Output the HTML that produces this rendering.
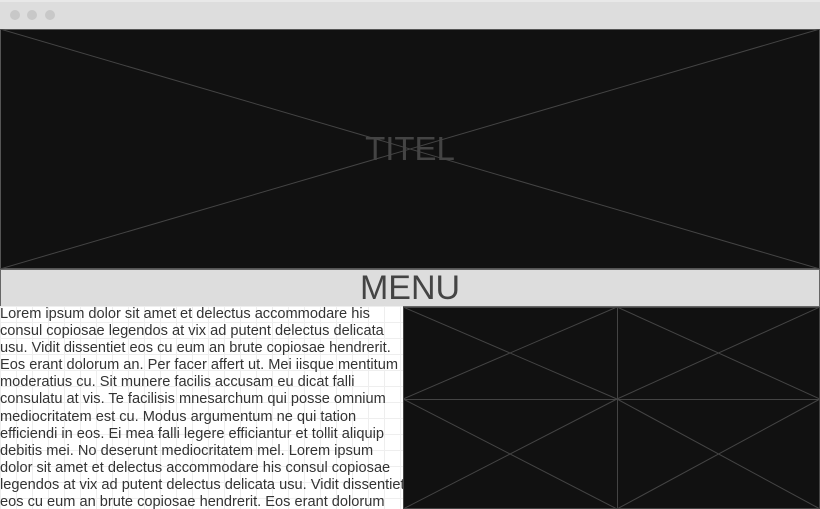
<!DOCTYPE html><html><head><style>
body{margin:0;width:820px;height:509px;overflow:hidden;background:#fff;font-family:"Liberation Sans",sans-serif;position:relative}
.bar{position:absolute;left:0;top:0;width:820px;height:29px;background:#ddd;border-top:2px solid #e8e8e8;box-sizing:border-box}
.dot{position:absolute;top:8px;width:10px;height:10px;border-radius:50%;background:#c8c8c8}
.hero{position:absolute;left:0;top:29px;width:820px;height:240px;background:#111;border:1px solid #555;box-sizing:border-box}
.hero span{position:absolute;left:0;right:0;top:100px;text-align:center;font-size:33px;color:#444}
.menu{position:absolute;left:0;top:269px;width:820px;height:38px;background:#ddd;border:1px solid #666;box-sizing:border-box;text-align:center;font-size:34px;line-height:36px;color:#444}
.txt{position:absolute;left:0;top:306px;width:403px;height:203px;overflow:hidden;font-size:14.6px;line-height:17.1px;color:#333;white-space:nowrap;
background-image:linear-gradient(#eee 1px,transparent 1px),linear-gradient(90deg,#eee 1px,transparent 1px);background-size:16px 16px}
.grid{position:absolute;left:403px;top:307px;width:417px;height:202px;background:#111}
</style></head><body>
<div class="bar"><div class="dot" style="left:10px"></div><div class="dot" style="left:27px"></div><div class="dot" style="left:45px"></div></div>
<div class="hero"><svg width="820" height="240" style="position:absolute;left:-1px;top:-1px"><line x1="0" y1="0" x2="820" y2="240" stroke="#444"/><line x1="820" y1="0" x2="0" y2="240" stroke="#444"/></svg><span>TITEL</span></div>
<div class="menu">MENU</div>
<div class="txt">Lorem ipsum dolor sit amet et delectus accommodare his<br>consul copiosae legendos at vix ad putent delectus delicata<br>usu. Vidit dissentiet eos cu eum an brute copiosae hendrerit.<br>Eos erant dolorum an. Per facer affert ut. Mei iisque mentitum<br>moderatius cu. Sit munere facilis accusam eu dicat falli<br>consulatu at vis. Te facilisis mnesarchum qui posse omnium<br>mediocritatem est cu. Modus argumentum ne qui tation<br>efficiendi in eos. Ei mea falli legere efficiantur et tollit aliquip<br>debitis mei. No deserunt mediocritatem mel. Lorem ipsum<br>dolor sit amet et delectus accommodare his consul copiosae<br>legendos at vix ad putent delectus delicata usu. Vidit dissentiet<br>eos cu eum an brute copiosae hendrerit. Eos erant dolorum</div>
<div class="grid"><svg width="417" height="202" style="position:absolute;left:0;top:0">
<g stroke="#444" fill="none">
<rect x="0.5" y="0.5" width="416" height="201"/>
<line x1="214.5" y1="0" x2="214.5" y2="202"/><line x1="0" y1="92.5" x2="417" y2="92.5"/>
<line x1="0" y1="0" x2="214" y2="92"/><line x1="214" y1="0" x2="0" y2="92"/>
<line x1="214" y1="0" x2="417" y2="92"/><line x1="417" y1="0" x2="214" y2="92"/>
<line x1="0" y1="92" x2="214" y2="202"/><line x1="214" y1="92" x2="0" y2="202"/>
<line x1="214" y1="92" x2="417" y2="202"/><line x1="417" y1="92" x2="214" y2="202"/>
</g></svg></div>
</body></html>
